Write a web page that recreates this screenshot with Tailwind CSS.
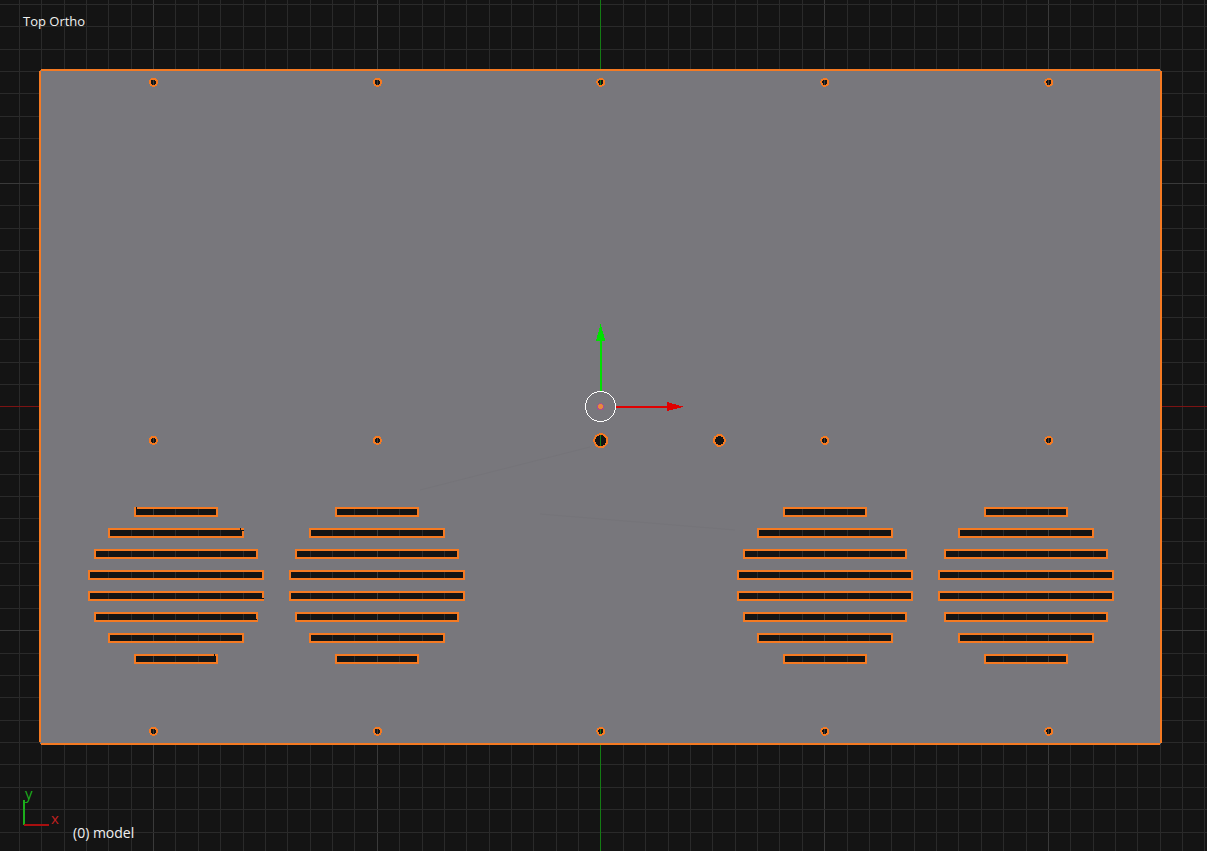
<!DOCTYPE html>
<html lang="en">
<head>
    <meta charset="UTF-8">
    <title>Top Ortho</title>
    <script src="https://cdn.jsdelivr.net/npm/@tailwindcss/browser@4"></script>
</head>
<body class="bg-[#141414] w-[1207px] h-[851px] overflow-hidden relative font-['Open_Sans',sans-serif]">
    <svg id="viewport" class="absolute inset-0" width="1207" height="851" viewBox="0 0 1207 851" shape-rendering="crispEdges">
        <g id="grid"></g>
        <rect x="600" y="0" width="1" height="851" fill="#137c13"/>
        <rect x="0" y="406" width="1207" height="1" fill="#7c1313"/>
        <path id="plate" fill="#78777c" fill-rule="evenodd"/>
        <g id="outlines" fill="none" stroke="#f57a22" stroke-width="2"></g>

        <!-- plate edge -->
        <g fill="#f57a22">
            <rect x="41" y="69" width="1119" height="2"/>
            <rect x="39" y="71" width="2" height="671"/>
            <rect x="1160" y="71" width="2" height="672"/>
            <rect x="41" y="743" width="1119" height="2"/>
        </g>

        <!-- small gaps in the outline of the first slot group -->
        <g fill="#141414">
            <rect x="136" y="507" width="1" height="2"/>
            <rect x="240" y="528" width="1" height="2"/>
            <rect x="241" y="530" width="3" height="1"/>
            <rect x="261" y="598" width="3" height="1"/>
            <rect x="255" y="619" width="2" height="1"/>
            <rect x="214" y="654" width="1" height="3"/>
        </g>

        <!-- faint marks on the plate -->
        <g stroke="#757479" stroke-width="1" shape-rendering="auto">
            <line x1="590" y1="447" x2="420" y2="490"/>
            <line x1="540" y1="514" x2="735" y2="530"/>
        </g>

        <!-- transform gizmo -->
        <g>
            <rect x="600" y="340" width="2" height="51" fill="#00e000"/>
            <polygon points="600.5,324 596,341 605.5,341" fill="#00e000"/>
            <rect x="616" y="406" width="52" height="2" fill="#e00000"/>
            <polygon points="667,402 684,406.8 667,411" fill="#e00000"/>
            <circle cx="600.5" cy="406.5" r="15" fill="none" stroke="#ffffff" stroke-width="1"/>
            <circle cx="600.5" cy="406.5" r="3" fill="#e8893c" stroke="#a8508c" stroke-width="1"/>
        </g>

        <!-- corner axes -->
        <rect x="23" y="800" width="2" height="25" fill="#1cae1c"/>
        <rect x="24" y="824" width="25" height="2" fill="#a80f0f"/>
    </svg>

    <span class="absolute left-[23px] top-[12px] text-[13px] leading-[18px] text-[#f0f0f0]">Top Ortho</span>
    <span class="absolute left-[73px] top-[824px] text-[14px] leading-[18px] text-[#f0f0f0]">(0) model</span>
    <span class="absolute left-[25px] top-[784px] text-[15px] leading-[18px] text-[#1cae1c]">y</span>
    <span class="absolute left-[51px] top-[809px] text-[15px] leading-[18px] text-[#c02020]">x</span>

    <script>
        const svgNs = 'http://www.w3.org/2000/svg';
        const step = 22.37;
        const cx = 600.5, cy = 406.5;

        function el(parent, name, attrs) {
            const node = document.createElementNS(svgNs, name);
            for (const k in attrs) node.setAttribute(k, attrs[k]);
            parent.appendChild(node);
            return node;
        }

        // background grid, every 10th line a little brighter
        const grid = document.getElementById('grid');
        for (let i = -27; i <= 27; i++) {
            if (i === 0) continue;
            const x = Math.round(cx + i * step) + 0.5;
            const major = (i % 10) === 0;
            el(grid, 'line', { x1: x, y1: 0, x2: x, y2: 851, stroke: major ? '#3a3a3a' : '#2a2a2a' });
        }
        for (let i = -20; i <= 20; i++) {
            if (i === 0) continue;
            const y = Math.round(cy + i * step) + 0.5;
            const major = (i % 10) === 0;
            el(grid, 'line', { x1: 0, y1: y, x2: 1207, y2: y, stroke: major ? '#3a3a3a' : '#2a2a2a' });
        }

        // slots: left offset, right offset and top edge of each row
        const rows = [[-41, 41, 508], [-67, 67, 529], [-81, 81, 550], [-87, 87, 571], [-87, 87, 592], [-81, 81, 613], [-67, 67, 634], [-41, 41, 655]];
        const groups = [176, 377, 825, 1026];
        const holes = [];
        [153.4, 377.4, 600.8, 824.8, 1048.8].forEach(x => {
            holes.push([x, 82.3, 3.5]);
            holes.push([x, 731.3, 3.5]);
        });
        holes.push([153.4, 440.4, 3.5], [377.4, 440.4, 3.5], [600.8, 440.6, 6.5], [719.4, 440.5, 5.4], [824.8, 440.4, 3.5], [1048.8, 440.4, 3.5]);

        let d = 'M40 70H1161V744H40Z';
        const outlines = document.getElementById('outlines');
        groups.forEach(gx => {
            rows.forEach(([l, r, y]) => {
                const slot = `M${gx + l} ${y}H${gx + r}V${y + 8}H${gx + l}Z`;
                d += slot;
                el(outlines, 'path', { d: slot });
            });
        });
        holes.forEach(([x, y, r]) => {
            const circle = `M${x - r} ${y}A${r} ${r} 0 1 0 ${x + r} ${y}A${r} ${r} 0 1 0 ${x - r} ${y}Z`;
            d += circle;
            el(outlines, 'path', { d: circle });
        });
        document.getElementById('plate').setAttribute('d', d);
    </script>
</body>
</html>
